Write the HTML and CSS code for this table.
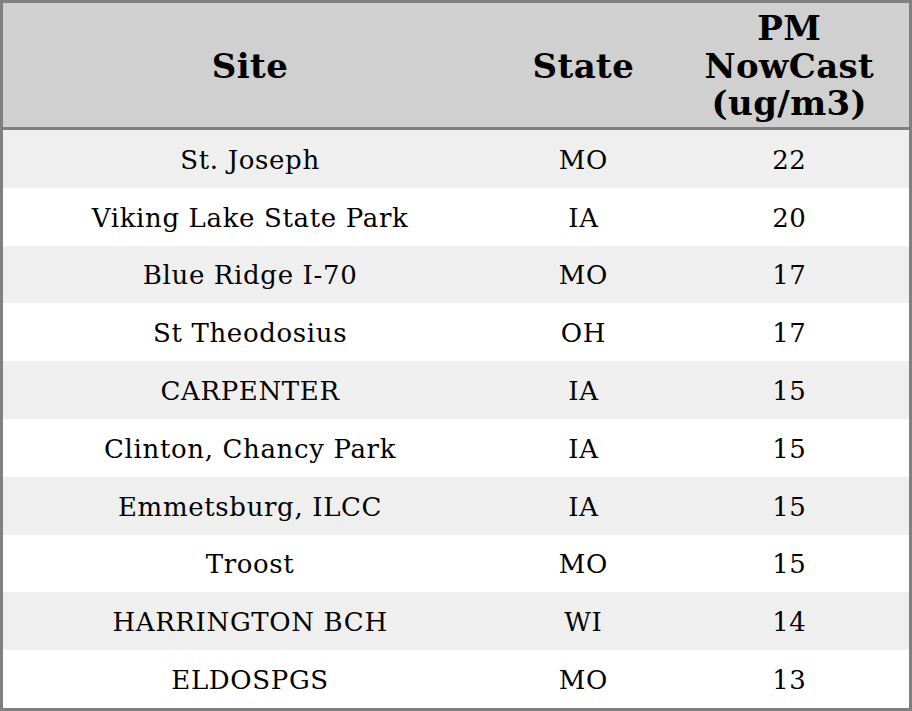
FILE: index.html
```html
<!DOCTYPE html>
<html>
<head>
<meta charset="utf-8">
<link rel="stylesheet" href="styles.css">
</head>
<body>
<table class="aq">
  <colgroup>
    <col class="c-site">
    <col class="c-state">
    <col class="c-pm">
  </colgroup>
  <thead>
    <tr class="head">
      <th>Site</th>
      <th>State</th>
      <th>PM<br>NowCast<br>(ug/m3)</th>
    </tr>
  </thead>
  <tbody>
    <tr><td>St. Joseph</td><td>MO</td><td>22</td></tr>
    <tr><td>Viking Lake State Park</td><td>IA</td><td>20</td></tr>
    <tr><td>Blue Ridge I-70</td><td>MO</td><td>17</td></tr>
    <tr><td>St Theodosius</td><td>OH</td><td>17</td></tr>
    <tr><td>CARPENTER</td><td>IA</td><td>15</td></tr>
    <tr><td>Clinton, Chancy Park</td><td>IA</td><td>15</td></tr>
    <tr><td>Emmetsburg, ILCC</td><td>IA</td><td>15</td></tr>
    <tr><td>Troost</td><td>MO</td><td>15</td></tr>
    <tr><td>HARRINGTON BCH</td><td>WI</td><td>14</td></tr>
    <tr><td>ELDOSPGS</td><td>MO</td><td>13</td></tr>
  </tbody>
</table>
</body>
</html>
```
FILE: styles.css
```css
html, body {
  margin: 0;
  padding: 0;
  background: #ffffff;
}
.aq {
  width: 912px;
  border-collapse: collapse;
  table-layout: fixed;
  border: 3px solid #808080;
  font-family: "DejaVu Serif", serif;
  color: #000;
}
.c-site { width: 494px; }
.c-state { width: 172px; }
.c-pm { width: 240px; }
.head {
  background: #d0d0d0;
  height: 127px;
  border-bottom: 3px solid #808080;
}
.aq th {
  font-size: 34px;
  font-weight: bold;
  line-height: 37.5px;
  letter-spacing: 0.4px;
  padding: 3px 0 0;
  text-align: center;
  vertical-align: middle;
}
.aq td {
  font-size: 26px;
  letter-spacing: 0.65px;
  height: 55.8px;
  padding: 2px 0 0;
  text-align: center;
  vertical-align: middle;
}
.aq tbody tr:nth-child(odd) { background: #efefef; }
.aq tbody tr:nth-child(even) { background: #ffffff; }
```
